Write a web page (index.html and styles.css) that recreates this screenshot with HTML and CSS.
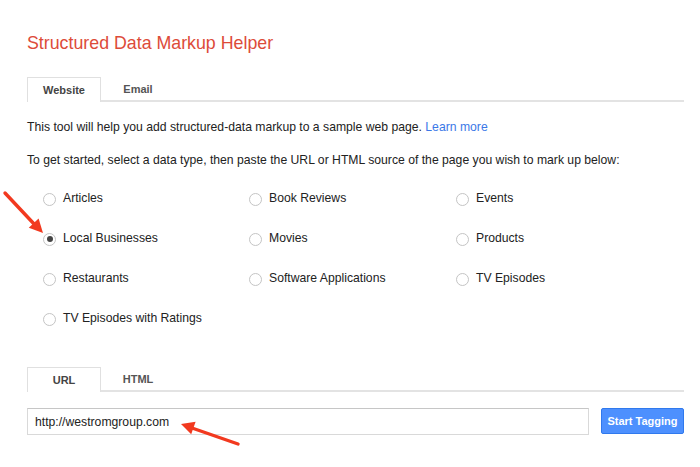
FILE: index.html
```html
<!DOCTYPE html>
<html>
<head>
<meta charset="utf-8">
<link rel="stylesheet" href="styles.css">
</head>
<body>
<div class="page">
  <h1 class="title">Structured Data Markup Helper</h1>
  <div class="tabs">
    <div class="tab active">Website</div>
    <div class="tab">Email</div>
  </div>
  <p class="text first">This tool will help you add structured-data markup to a sample web page. <a class="link" href="#">Learn more</a></p>
  <p class="text">To get started, select a data type, then paste the URL or HTML source of the page you wish to mark up below:</p>
  <div class="types">
    <label class="opt"><span class="radio"></span>Articles</label>
    <label class="opt"><span class="radio"></span>Book Reviews</label>
    <label class="opt"><span class="radio"></span>Events</label>
    <label class="opt"><span class="radio checked"></span>Local Businesses</label>
    <label class="opt"><span class="radio"></span>Movies</label>
    <label class="opt"><span class="radio"></span>Products</label>
    <label class="opt"><span class="radio"></span>Restaurants</label>
    <label class="opt"><span class="radio"></span>Software Applications</label>
    <label class="opt"><span class="radio"></span>TV Episodes</label>
    <label class="opt"><span class="radio"></span>TV Episodes with Ratings</label>
  </div>
  <div class="tabs lower">
    <div class="tab active">URL</div>
    <div class="tab">HTML</div>
  </div>
  <div class="urlrow">
    <div class="input">http://westromgroup.com</div>
    <button class="btn">Start Tagging</button>
  </div>
</div>
<svg class="arrows" width="700" height="467" viewBox="0 0 700 467">
  <line x1="5" y1="193" x2="35" y2="225" stroke="#f2391f" stroke-width="3.4" stroke-linecap="round"/>
  <polygon points="43,233 28.8,227.8 38.6,218.6" fill="#f2391f"/>
  <line x1="238" y1="444" x2="192" y2="428" stroke="#f2391f" stroke-width="3.4" stroke-linecap="round"/>
  <polygon points="181,424 195.6,421.8 191.2,434.2" fill="#f2391f"/>
</svg>
</body>
</html>
```
FILE: styles.css
```css
html, body {
  margin: 0;
  padding: 0;
  background: #fff;
}
body {
  font-family: "Liberation Sans", Arial, sans-serif;
  color: #222;
  position: relative;
  width: 700px;
  height: 467px;
  overflow: hidden;
}
.page {
  padding: 31px 16px 0 27px;
}
.title {
  margin: 0;
  font-size: 17.8px;
  line-height: 24px;
  font-weight: normal;
  color: #dd4b39;
}
.tabs {
  display: flex;
  margin-top: 22px;
  border-bottom: 2px solid #e3e3e3;
  height: 23px;
}
.tab {
  width: 74px;
  height: 24px;
  box-sizing: border-box;
  display: flex;
  align-items: center;
  justify-content: center;
  font-size: 11px;
  font-weight: bold;
  color: #555;
}
.tab.active {
  border: 1px solid #e0e0e0;
  border-bottom: none;
  background: #fff;
  height: 25px;
  color: #444;
}
.text {
  margin: 15px 0 0;
  font-size: 12.2px;
  line-height: 18px;
}
.text.first {
  margin-top: 16px;
}
.link {
  color: #3b78e7;
  text-decoration: none;
}
.types {
  display: grid;
  grid-template-columns: 206px 207px 206px;
  row-gap: 20px;
  padding-left: 16px;
  margin-top: 19px;
}
.opt {
  display: flex;
  align-items: center;
  height: 20px;
  font-size: 12.2px;
  color: #222;
}
.radio {
  width: 13px;
  height: 13px;
  box-sizing: border-box;
  border: 1px solid #c4c4c4;
  border-radius: 50%;
  margin-right: 7px;
  margin-top: 2px;
  display: flex;
  align-items: center;
  justify-content: center;
  flex: none;
}
.radio.checked::after {
  content: "";
  width: 6px;
  height: 6px;
  border-radius: 50%;
  background: #444;
}
.tabs.lower {
  margin-top: 39px;
}
.urlrow {
  display: flex;
  gap: 12px;
  margin-top: 16px;
}
.input {
  width: 562px;
  height: 27px;
  box-sizing: border-box;
  border: 1px solid #d9d9d9;
  border-top-color: #c6c6c6;
  padding: 0 7px;
  display: flex;
  align-items: center;
  font-size: 12.2px;
  color: #222;
}
.btn {
  width: 83px;
  height: 26px;
  border: 1px solid #3079ed;
  border-radius: 2px;
  background: #4d90fe;
  color: #fff;
  font-family: "Liberation Sans", Arial, sans-serif;
  font-size: 11px;
  font-weight: bold;
  padding: 0;
}
.arrows {
  position: absolute;
  left: 0;
  top: 0;
  pointer-events: none;
}
```
